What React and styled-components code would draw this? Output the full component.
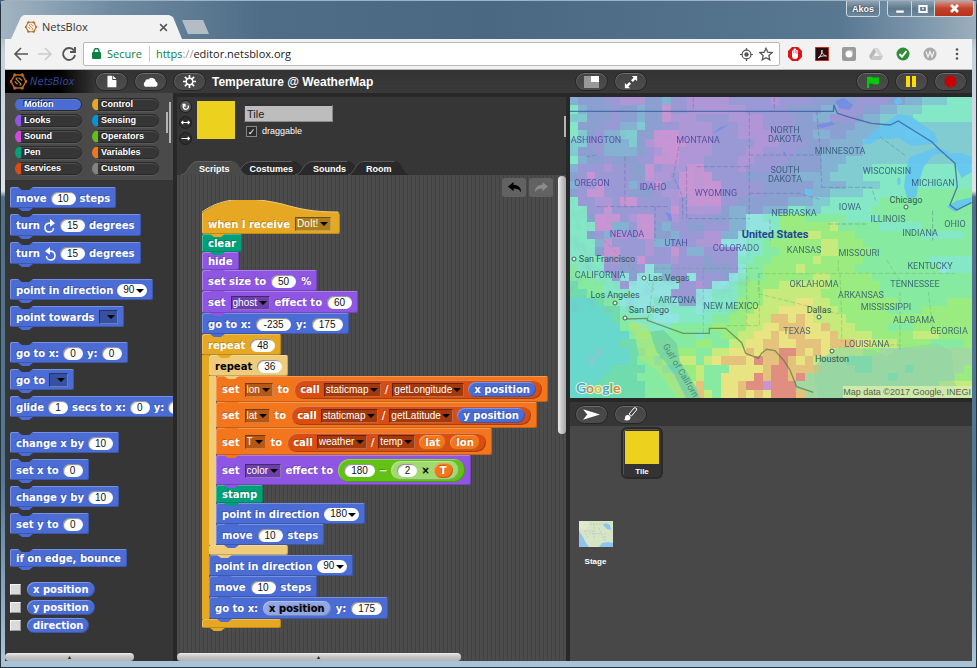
import React from "react";
import styled, { createGlobalStyle } from "styled-components";

const GlobalStyle = createGlobalStyle`
  * {
    box-sizing: border-box;
  }
  body {
    margin: 0;
    background: #3f617c;
  }
  button, input, select {
    font-family: inherit;
    margin: 0;
  }
  button {
    cursor: pointer;
  }
`;

const colors = {
  motion: "#4a6cd4",
  looks: "#8f56e3",
  sound: "#cf4ad9",
  pen: "#00a178",
  services: "#d94d11",
  control: "#e6a822",
  controlLight: "#efcb7a",
  sensing: "#0494dc",
  operators: "#62c213",
  operatorsLight: "#a1da71",
  variables: "#f3761d",
  custom: "#828282",
};

/* ---------- browser window ---------- */

const Window = styled.div`
  display: flex;
  flex-direction: column;
  min-height: 100vh;
  padding: 0 4px 6px 4px;
  background: linear-gradient(#7d95a8 0, #c6d0d8 50px, #dce2e6 190px, #4f7188 196px, #537892 480px, #a9c4d8 660px);
  border: 1px solid #26333d;
  border-top-color: #9fb2c1;
  border-radius: 6px 6px 0 0;
  font-family: "Liberation Sans", Arial, sans-serif;
`;

const TitleBar = styled.header`
  display: flex;
  align-items: flex-start;
  justify-content: space-between;
  height: 38px;
  margin: 0 -4px;
  padding: 0 2px 0 10px;
  background: linear-gradient(90deg, #a3b4c2 0, #6f8ba2 110px, #4f6d87 260px, #4a6882 50%, #587791 86%, #7f99ad 95%, #9cafbd);
`;

const TabStrip = styled.div`
  display: flex;
  align-items: center;
  align-self: flex-end;
`;

const BrowserTab = styled.div`
  display: flex;
  align-items: center;
  width: 171px;
  height: 24px;
  padding: 0 14px 0 14px;
  clip-path: polygon(0 100%, 10px 2px, 13px 0, 158px 0, 162px 2px, 100% 100%);
  background: #f2f2f2;
  color: #333;
  font-family: "Open Sans", "Noto Sans", sans-serif;
  font-size: 11px;
  line-height: 16px;
  span {
    flex: 1;
    padding-left: 5px;
  }
`;

const PlainButton = styled.button`
  display: inline-flex;
  align-items: center;
  justify-content: center;
  padding: 0;
  border: 0;
  background: none;
  color: ${(props) => props.$color || "#555"};
`;

const NewTab = styled.button`
  width: 27px;
  height: 14px;
  padding: 0;
  border: 0;
  background: #b5bdc4;
  clip-path: polygon(0 0, 78% 0, 100% 100%, 22% 100%);
`;

const WindowControls = styled.div`
  display: flex;
  gap: 7px;
`;

const ControlGroup = styled.div`
  display: flex;
  height: 16px;
  border: 1px solid #cbd6df;
  border-top: 0;
  border-radius: 0 0 4px 4px;
  overflow: hidden;
`;

const WindowButton = styled.button`
  display: flex;
  align-items: center;
  justify-content: center;
  width: ${(props) => props.$width}px;
  padding: 0;
  border: 0;
  border-right: 1px solid #cbd6df;
  background: ${(props) =>
    props.$close
      ? "linear-gradient(#d9968b, #c1422a 50%, #b8321a)"
      : "linear-gradient(#8fa3b3, #5f7a8e 50%, #6f899b)"};
  color: #fff;
  font-size: 9px;
  font-weight: bold;
  text-shadow: 0 0 2px #223;
  &:last-child {
    border-right: 0;
  }
`;

const Toolbar = styled.div`
  display: flex;
  align-items: center;
  height: 31px;
  padding: 0 8px 0 8px;
  background: #f2f2f2;
  border-bottom: 1px solid #b5b5b5;
`;

const NavButtons = styled.div`
  display: flex;
  gap: 8px;
  width: 70px;
`;

const AddressBar = styled.div`
  display: flex;
  flex: 1;
  align-items: center;
  gap: 6px;
  height: 24px;
  padding: 0 6px 0 8px;
  border: 1px solid #b8b8b8;
  border-radius: 2px;
  background: #fff;
  font-family: "Open Sans", "Noto Sans", sans-serif;
  font-size: 11px;
  line-height: 16px;
`;

const Secure = styled.span`
  padding-right: 7px;
  border-right: 1px solid #ccc;
  color: #0b8043;
`;

const Url = styled.span`
  flex: 1;
  color: #222;
  em {
    font-style: normal;
    color: #0b8043;
  }
  i {
    font-style: normal;
    color: #999;
  }
`;

const Extensions = styled.div`
  display: flex;
  gap: 13px;
  padding-left: 8px;
`;

/* ---------- IDE ---------- */

const Ide = styled.main`
  display: grid;
  flex: 1;
  grid-template-columns: 168px minmax(0, 1fr) 402px;
  grid-template-rows: 23px minmax(0, 1fr);
  column-gap: 4px;
  background: #282828;
`;

const ControlBar = styled.div`
  display: flex;
  grid-column: 1 / -1;
  align-items: center;
  background: linear-gradient(#333, #3a3a3a);
  color: #fff;
`;

const Logo = styled.div`
  display: flex;
  align-items: center;
  gap: 3px;
  width: 90px;
  height: 23px;
  padding-left: 5px;
  background: linear-gradient(90deg, #000 60%, #353535);
  color: #33489c;
  font-family: "DejaVu Sans", sans-serif;
  font-size: 10px;
  font-style: italic;
`;

const BarGroup = styled.div`
  display: flex;
  gap: 6px;
`;

const ProjectTitle = styled.h1`
  flex: 1;
  margin: 0;
  padding-left: 6px;
  font-size: 12px;
  line-height: 16px;
`;

const StageControls = styled.div`
  display: flex;
  justify-content: space-between;
  width: 402px;
  padding: 0 5px;
`;

const PushButton = styled.button`
  display: flex;
  align-items: center;
  justify-content: center;
  width: 33px;
  height: 19px;
  padding: 0;
  border: 1px solid #252525;
  border-radius: 10px;
  background: linear-gradient(#444, #4c4c4c);
  box-shadow: inset 0 1px 0 #6d6d6d, inset 1px 0 0 #5c5c5c;
  color: #fff;
`;

const Column = styled.section`
  display: flex;
  flex-direction: column;
  min-width: 0;
`;

const Categories = styled.div`
  position: relative;
  display: grid;
  grid-template-columns: 67px 67px;
  gap: 3px 10px;
  padding: 5px 0 5px 10px;
  background: #4a4a4a;
`;

const CategoryButton = styled.button`
  height: 13px;
  padding: 0 0 0 3px;
  border: 1px solid #2a2a2a;
  border-left: 6px solid ${(props) => props.$color};
  border-radius: 7px;
  background: ${(props) => (props.$active ? props.$color : "#363636")};
  box-shadow: inset 0 1px 0 rgba(255, 255, 255, 0.12), 0 1px 0 #595959;
  color: #fff;
  font-size: 9px;
  font-weight: bold;
  line-height: 11px;
  text-align: left;
  text-shadow: -1px -1px 0 #222;
`;

const Grip = styled.span`
  position: absolute;
  top: ${(props) => props.$top}px;
  right: ${(props) => props.$right}px;
  width: 2px;
  height: ${(props) => props.$height}px;
  background: #b4b4b4;
`;

const Palette = styled.div`
  display: flex;
  flex: 1;
  flex-direction: column;
  gap: 15px;
  padding: 7px 0 0 5px;
  overflow: hidden;
  background: #363636;
`;

const PaletteGroup = styled.div`
  display: flex;
  flex-direction: column;
  gap: ${(props) => props.$gap || 6}px;
`;

const WatcherRow = styled.label`
  display: flex;
  align-items: center;
  gap: 6px;
  input {
    appearance: none;
    width: 11px;
    height: 11px;
    border: 1px solid #f4f4f4;
    border-right-color: #999;
    border-bottom-color: #999;
    background: #dadada;
  }
`;

const ScrollThumb = styled.div`
  width: ${(props) => props.$width};
  height: 8px;
  margin-top: auto;
  border-radius: 4px;
  background: linear-gradient(#eee, #c8c8c8 40%, #b4b4b4);
  color: #222;
  font-size: 6px;
  line-height: 8px;
  text-align: center;
`;

const SpriteBar = styled.div`
  position: relative;
  display: flex;
  height: 64px;
  margin-top: 4px;
  padding: 3px 0 0 2px;
  gap: 5px;
  background: #363636;
  color: #fff;
`;

const RotationButtons = styled.div`
  display: flex;
  flex-direction: column;
  gap: 3px;
`;

const RoundButton = styled.button`
  display: flex;
  align-items: center;
  justify-content: center;
  width: 13px;
  height: 13px;
  padding: 0;
  border: 1px solid #1d1d1d;
  border-radius: 50%;
  background: ${(props) => (props.$active ? "#565656" : "#2e2e2e")};
  color: #fff;
`;

const Swatch = styled.div`
  width: ${(props) => props.$size}px;
  height: ${(props) => props.$size}px;
  margin-top: ${(props) => props.$top || 0}px;
  background: #edd11f;
`;

const SpriteFields = styled.div`
  display: flex;
  flex-direction: column;
  gap: 3px;
  padding: 4px 0 0 4px;
`;

const NameInput = styled.input`
  width: 89px;
  height: 18px;
  padding: 0 2px;
  border: 1px solid #8a8a8a;
  border-top: 2px solid #333;
  border-left-color: #444;
  background: #bdbdbd;
  color: #222;
  font-size: 11px;
`;

const CheckLabel = styled.label`
  display: flex;
  align-items: center;
  gap: 5px;
  padding-left: 2px;
  font-size: 9px;
  line-height: 12px;
  input {
    appearance: none;
    display: grid;
    place-items: center;
    width: 11px;
    height: 11px;
    border: 1px solid #888;
    background: #2c2c2c;
  }
  input:checked::before {
    content: "✓";
    color: #fff;
    font-family: "DejaVu Sans", sans-serif;
    font-size: 9px;
  }
`;

const Tabs = styled.nav`
  display: flex;
  height: 14px;
  padding-left: 4px;
  background: #363636;
`;

const TabButton = styled.button`
  position: relative;
  z-index: ${(props) => (props.$active ? 1 : 0)};
  height: 14px;
  margin-right: -16px;
  padding: 2px 18px 0;
  border: 0;
  background: none;
  color: #fff;
  font-size: 9px;
  font-weight: bold;
  line-height: 12px;
  svg {
    position: absolute;
    inset: 0;
    z-index: -1;
    width: 100%;
    height: 100%;
  }
`;

const ScriptPane = styled.div`
  position: relative;
  display: flex;
  flex: 1;
  flex-direction: column;
  padding: 25px 0 0 25px;
  background: repeating-linear-gradient(90deg, #4b4b4b 0 2px, #424242 2px 3px, #4d4d4d 3px 4px);
`;

const UndoGroup = styled.div`
  position: absolute;
  top: 3px;
  right: 13px;
  display: flex;
  gap: 3px;
  button {
    display: flex;
    align-items: center;
    justify-content: center;
    width: 24px;
    height: 19px;
    padding: 0;
    border: 0;
    border-radius: 3px;
    background: #626262;
  }
`;

const VerticalThumb = styled.div`
  position: absolute;
  top: 1px;
  right: 0;
  width: 8px;
  height: 53%;
  border-radius: 4px;
  background: linear-gradient(90deg, #eee, #c4c4c4 50%, #a8a8a8);
`;

const PaneScroll = styled.div`
  display: flex;
  margin: auto 0 0 -25px;
`;

const Stage = styled.div`
  margin-top: 4px;
  svg {
    display: block;
    width: 100%;
    height: auto;
  }
`;

const CorralBar = styled.div`
  display: flex;
  gap: 6px;
  align-items: center;
  height: 24px;
  margin-top: 4px;
  padding-left: 5px;
  background: #363636;
`;

const Corral = styled.div`
  display: flex;
  flex: 1;
  background: #484848;
`;

const StageIcon = styled.div`
  display: flex;
  flex-direction: column;
  align-items: center;
  align-self: center;
  gap: 10px;
  width: 51px;
  color: #fff;
  font-size: 8px;
  font-weight: bold;
  line-height: 10px;
`;

const SpriteIcon = styled.div`
  display: flex;
  flex-direction: column;
  align-items: center;
  gap: 3px;
  width: 42px;
  height: 52px;
  margin-top: 1px;
  padding-top: 2px;
  border: 2px solid #2a2a2a;
  border-radius: 6px;
  background: #333;
  box-shadow: inset 1px 1px 0 #555;
  color: #fff;
  font-size: 8px;
  font-weight: bold;
  line-height: 10px;
`;

/* ---------- blocks ---------- */

const notch = "polygon(0 0, 100% 0, 11px 100%, 4px 100%)";

const BlockBody = styled.div`
  position: relative;
  display: flex;
  flex-shrink: 0;
  align-items: center;
  gap: 5px;
  width: max-content;
  height: ${(props) => props.$height || 21}px;
  padding: 1px 6px 0;
  border-radius: 2px;
  background: ${(props) => props.$color};
  box-shadow: inset 1px 1px 0 rgba(255, 255, 255, 0.25), inset -1px -1px 0 rgba(0, 0, 0, 0.18);
  color: ${(props) => (props.$dark ? "#000" : "#fff")};
  text-shadow: ${(props) => (props.$dark ? "none" : "-1px -1px 0 rgba(0, 0, 0, 0.22)")};
  font-family: "DejaVu Sans", Verdana, sans-serif;
  font-size: 10px;
  font-weight: bold;
  line-height: 13px;
  white-space: nowrap;
  &::after {
    content: "";
    position: absolute;
    z-index: 1;
    bottom: -3px;
    left: ${(props) => props.$tab || 8}px;
    width: 15px;
    height: 3px;
    background: ${(props) => props.$color};
    clip-path: ${notch};
  }
`;

const PaletteBlock = styled(BlockBody)`
  gap: 4px;
  &::before {
    content: "";
    position: absolute;
    top: 0;
    left: 8px;
    width: 15px;
    height: 3px;
    background: #363636;
    clip-path: ${notch};
  }
`;

const HatTop = styled.svg`
  display: block;
  width: 138px;
  height: 13px;
`;

const HatBody = styled(BlockBody)`
  min-width: 138px;
  border-radius: 0 2px 2px 2px;
  box-shadow: inset 1px 0 0 rgba(255, 255, 255, 0.25), inset -1px -1px 0 rgba(0, 0, 0, 0.18);
`;

const LoopBody = styled.div`
  border-left: 7px solid ${(props) => props.$color};
`;

const LoopFoot = styled(BlockBody)`
  width: 79px;
`;

const Pill = styled.span`
  display: inline-flex;
  align-items: center;
  gap: ${(props) => props.$gap || 4}px;
  height: ${(props) => props.$height || 15}px;
  padding: 0 ${(props) => props.$pad || 6}px;
  border-radius: 12px;
  background: ${(props) => props.$color};
  box-shadow: inset 1px 1px 0 rgba(255, 255, 255, 0.28), inset -1px -1px 0 rgba(0, 0, 0, 0.2);
  color: ${(props) => (props.$dark ? "#000" : "#fff")};
  font-family: "DejaVu Sans", Verdana, sans-serif;
  font-size: 10px;
  font-weight: bold;
  line-height: 13px;
  white-space: nowrap;
`;

const NumberSlot = styled.input`
  width: ${(props) => props.$width}px;
  height: 13px;
  padding: 0;
  border: 0;
  border-radius: 7px;
  background: #fff;
  box-shadow: inset 1px 1px 1px rgba(0, 0, 0, 0.45);
  color: #111;
  font-family: "Liberation Sans", Arial, sans-serif;
  font-size: 10px;
  line-height: 13px;
  text-align: center;
`;

const MenuWrap = styled.span`
  position: relative;
  display: inline-flex;
  &::after {
    content: "";
    position: absolute;
    top: 5px;
    right: 3px;
    border: 4px solid transparent;
    border-top-color: #000;
    border-bottom: 0;
    pointer-events: none;
  }
  select {
    appearance: none;
    min-width: 19px;
    height: ${(props) => (props.$round ? 13 : 14)}px;
    padding: ${(props) => (props.$round ? "0 12px 0 6px" : "0 11px 0 1px")};
    border: ${(props) => (props.$round ? "0" : "1px solid")};
    border-color: rgba(0, 0, 0, 0.35) rgba(255, 255, 255, 0.25) rgba(255, 255, 255, 0.25) rgba(0, 0, 0, 0.35);
    border-radius: ${(props) => (props.$round ? 7 : 0)}px;
    background: ${(props) => (props.$round ? "#fff" : "rgba(0, 0, 0, 0.25)")};
    color: ${(props) => (props.$round ? "#111" : "#fff")};
    font-family: "Liberation Sans", Arial, sans-serif;
    font-size: 10px;
    line-height: 12px;
  }
`;

const slotWidths = { 1: 20, 2: 25, 3: 31, 4: 35 };

function Num({ value, label = "number" }) {
  return (
    <NumberSlot
      $width={slotWidths[value.length]}
      defaultValue={value}
      aria-label={label}
    />
  );
}

function Menu({ value = "", round }) {
  return (
    <MenuWrap $round={round}>
      <select aria-label={value || "choice"} defaultValue={value}>
        <option value={value}>{value}</option>
      </select>
    </MenuWrap>
  );
}

function Loop({ color, count, dark, last, children }) {
  return (
    <div>
      <BlockBody $color={color} $dark={dark} $tab={15}>
        repeat <Num value={count} />
      </BlockBody>
      <LoopBody $color={color}>{children}</LoopBody>
      <LoopFoot as="div" $color={color} $height={last ? 9 : 10} />
    </div>
  );
}

function Call({ service, rpc, children }) {
  return (
    <Pill $color={colors.services} $height={19} $pad={6} $gap={4}>
      call <Menu value={service} /> / <Menu value={rpc} /> {children}
    </Pill>
  );
}

function TurnIcon({ flip }) {
  return (
    <svg width="12" height="14" viewBox="0 0 12 14">
      <g transform={flip ? "translate(12 0) scale(-1 1)" : undefined}>
        <path d="M7 4C3 4 1 6 1 8.500c0 3 2 4.500 4.500 4.500S9.500 11 9.500 9" fill="none" stroke="#fff" strokeWidth="1.500" />
        <path d="M6 0l5 4.200-5 3.600z" fill="#fff" />
      </g>
    </svg>
  );
}

function PaletteBlocks() {
  const m = colors.motion;
  return (
    <>
      <PaletteGroup>
        <PaletteBlock $color={m}>
          move <Num value="10" /> steps
        </PaletteBlock>
        <PaletteBlock $color={m} $height={22}>
          turn <TurnIcon /> <Num value="15" /> degrees
        </PaletteBlock>
        <PaletteBlock $color={m} $height={22}>
          turn <TurnIcon flip /> <Num value="15" /> degrees
        </PaletteBlock>
      </PaletteGroup>
      <PaletteGroup>
        <PaletteBlock $color={m}>
          point in direction <Menu value="90" round />
        </PaletteBlock>
        <PaletteBlock $color={m}>
          point towards <Menu />
        </PaletteBlock>
      </PaletteGroup>
      <PaletteGroup>
        <PaletteBlock $color={m}>
          go to x: <Num value="0" /> y: <Num value="0" />
        </PaletteBlock>
        <PaletteBlock $color={m}>
          go to <Menu />
        </PaletteBlock>
        <PaletteBlock $color={m}>
          glide <Num value="1" /> secs to x: <Num value="0" /> y: <Num value="0" />
        </PaletteBlock>
      </PaletteGroup>
      <PaletteGroup>
        <PaletteBlock $color={m}>
          change x by <Num value="10" />
        </PaletteBlock>
        <PaletteBlock $color={m}>
          set x to <Num value="0" />
        </PaletteBlock>
        <PaletteBlock $color={m}>
          change y by <Num value="10" />
        </PaletteBlock>
        <PaletteBlock $color={m}>
          set y to <Num value="0" />
        </PaletteBlock>
      </PaletteGroup>
      <PaletteBlock $color={m} $height={18}>
        if on edge, bounce
      </PaletteBlock>
      <PaletteGroup $gap={3}>
        {["x position", "y position", "direction"].map((name) => (
          <WatcherRow key={name}>
            <input type="checkbox" />
            <Pill $color={m}>{name}</Pill>
          </WatcherRow>
        ))}
      </PaletteGroup>
    </>
  );
}

function Script() {
  const c = colors;
  return (
    <div>
      <HatTop viewBox="0 0 138 13">
        <path d="M0 13C22-4 50-3 80 4c18 5 30 8 56 8l2 1z" fill={c.control} />
        <path d="M0 12C22-4 50-3 80 4c18 5 30 8 56 8" fill="none" stroke="#f3cf7c" />
      </HatTop>
      <HatBody $color={c.control}>
        when I receive <Menu value="DoIt!" />
      </HatBody>
      <BlockBody $color={c.pen} $height={18}>clear</BlockBody>
      <BlockBody $color={c.looks} $height={18}>hide</BlockBody>
      <BlockBody $color={c.looks}>
        set size to <Num value="50" /> %
      </BlockBody>
      <BlockBody $color={c.looks} $height={22}>
        set <Menu value="ghost" /> effect to <Num value="60" />
      </BlockBody>
      <BlockBody $color={c.motion} $height={21}>
        go to x: <Num value="-235" /> y: <Num value="175" />
      </BlockBody>
      <Loop color={c.control} count="48" last>
        <Loop color={c.controlLight} count="36" dark>
          <BlockBody $color={c.variables} $height={26}>
            set <Menu value="lon" /> to
            <Call service="staticmap" rpc="getLongitude">
              <Pill $color={c.motion}>x position</Pill>
            </Call>
          </BlockBody>
          <BlockBody $color={c.variables} $height={26}>
            set <Menu value="lat" /> to
            <Call service="staticmap" rpc="getLatitude">
              <Pill $color={c.motion}>y position</Pill>
            </Call>
          </BlockBody>
          <BlockBody $color={c.variables} $height={27}>
            set <Menu value="T" /> to
            <Call service="weather" rpc="temp">
              <Pill $color={c.variables}>lat</Pill>
              <Pill $color={c.variables}>lon</Pill>
            </Call>
          </BlockBody>
          <BlockBody $color={c.looks} $height={30}>
            set <Menu value="color" /> effect to
            <Pill $color={c.operators} $height={23}>
              <Num value="180" /> −
              <Pill $color={c.operatorsLight} $height={19} $dark>
                <Num value="2" /> ×
                <Pill $color={c.variables}>T</Pill>
              </Pill>
            </Pill>
          </BlockBody>
          <BlockBody $color={c.pen} $height={18}>stamp</BlockBody>
          <BlockBody $color={c.motion}>
            point in direction <Menu value="180" round />
          </BlockBody>
          <BlockBody $color={c.motion}>
            move <Num value="10" /> steps
          </BlockBody>
        </Loop>
        <BlockBody $color={c.motion}>
          point in direction <Menu value="90" round />
        </BlockBody>
        <BlockBody $color={c.motion}>
          move <Num value="10" /> steps
        </BlockBody>
        <BlockBody $color={c.motion} $height={22}>
          go to x:
          <Pill $color="#92a7e5" $dark>x position</Pill> y: <Num value="175" />
        </BlockBody>
      </Loop>
    </div>
  );
}

/* ---------- weather map ---------- */

const cellColors = {
  P: "#c994d4",
  p: "#b096d7",
  v: "#9b98d6",
  b: "#8b9fd0",
  c: "#84b2d2",
  t: "#80ccd0",
  k: "#92e4e0",
  m: "#84e8c6",
  g: "#86eba0",
  l: "#9aec80",
  y: "#c6ea7c",
  Y: "#e8e481",
  o: "#e5c27c",
  r: "#e08e7f",
  s: "#68d8cc",
  e: "#70dcae",
  u: "#a2d8a2",
};

// one string per row of tiles, run-length coded
const tileRows = [
  "c1b3v2p3b2c1v2p5v5p1v4b5v4b2c2t3m5",
  "m1c1b3v1b2c1b2P1v2p7v5b4c2v3b2c2t3m6",
  "t2b3v1b2c1b2P1p3v4p4v4b2c2v3b1c2t4m6",
  "m1b3v2c2t1b2v2p4v3p3v4b3v1b3c3t11",
  "m1t1b1v1c2t2b2P3p4v3p4v3b2c2b2c4t3k3t7",
  "t2v2c3t1b1p1P4p3v5p3v3b3c4t12",
  "t1b2v1c4b1v1p1P2p4v4p2v4b3c5t12",
  "m1c1b2v1b3v2P3p3v4p2v4b4c3t14",
  "c1v3p1v2b2P1v1p3P2v4p1v4b5c2t4m12",
  "b1v1P1v4b2P1p2v1P4v4b6c4t4m12",
  "c1v2P1v3c1v2P1v2P5v5b6c4t4m11",
  "b1v1P2v3b3v1p2P5v5b5c3t4m5g9",
  "m1v2p2v1P2v4p1v1P4v2b6c3t2m6g11",
  "m2v2P1v7P1v1p4b1c2b2c3m2t2m6g12",
  "m2b1P3v1p1P2v2p1v1v3b2c2k2m2l3g5m4g12",
  "m3P2c2v1P2b1c1v2b2v3c2k3m1l6y1g5m5g9",
  "m2b1v1c1p2v1P2b2c1v3p2c2k2m2g2l2y2l4g8m5g5",
  "m3c1P1v4p1c2b2v1p3k3m2g1l6y2l3g14",
  "m3b1P2v3p1v2P1v1c2v4k1m2g2l5y2l4g12",
  "m4p2v2P1v3p1v3b1v3m2g2l5y1l5g8m3",
  "g1m3v2b2v1k1c2v3v1b3v1k1g2l4y1l6g10k1m3",
  "g3m2v1k1b1k3c1v2k1v3b1k1m1g2l6y2l5g12",
  "e1g3m2v1k3k3v2p1v1k2m1g1l4y6l6g12l3",
  "e2g2m3k5v1v2k2m3g1l2y7l7g11l2",
  "s3e1g2k4m2k1b2k2m3l3y4Y2y2l8g6l6",
  "s4e2m2k4m3k1m3g1l2y3Y4y3l6g4l9",
  "s5e1g1m3k3m4g2l2y3o2Y1o1Y1y4l16",
  "s6g1l1m4g5l4y2Y2o3Y2o1y3l4g3l8",
  "s7g1l2g5m1g2l2y2Y2o1Y1o2Y3o1y4l5y3l8",
  "s6e2g2l2g3l2g2y2Y2o2Y2o3Y1o3Y2y3l4g4l4",
  "s3t1s3e2l2g1l3g2y2Y2o1Y1o2r2o1Y1o1Y1y4l2u10",
  "s2t1s4e1g2s1l2y2g1y1Y1o3Y1r1o2r1o1Y1o1y1u3e3u12",
  "s5e4g2s2l2y1g3Y2Y2o1r2o3o1u4e2u4e1u6l2",
  "s4e4g4u1l2y1g2Y4r1o1r2o1r1u10e1u7l3",
  "s3e6g4u1y1o1g2Y2o1r1r1P1r3u17y2",
  "s2e7g4u1l1o1y1g1Y2o1Y1o1Y1r3o1u19",
];

function decodeRow(row) {
  const tiles = [];
  let start = 0;
  for (const [, key, count] of row.matchAll(/([a-zA-Z])(\d+)/g)) {
    const end = start + Number(count);
    tiles.push({ key, start, end });
    start = end;
  }
  tiles[tiles.length - 1].end = 48;
  return tiles;
}

const states = [
  ["ASHINGTON", 26, 46], ["MONTANA", 128, 46], ["NORTH", 215, 36],
  ["DAKOTA", 215, 45], ["MINNESOTA", 270, 57], ["SOUTH", 215, 76],
  ["DAKOTA", 215, 85], ["WISCONSIN", 317, 77], ["MICHIGAN", 363, 89],
  ["OREGON", 22, 89], ["IDAHO", 83, 93], ["WYOMING", 146, 99],
  ["IOWA", 280, 113], ["NEBRASKA", 224, 119], ["ILLINOIS", 318, 125],
  ["OHIO", 385, 130], ["INDIANA", 350, 139], ["NEVADA", 57, 140],
  ["UTAH", 106, 149], ["COLORADO", 166, 154], ["KANSAS", 234, 156],
  ["MISSOURI", 289, 159], ["KENTUCKY", 360, 172], ["CALIFORNIA", 30, 181],
  ["OKLAHOMA", 244, 190], ["TENNESSEE", 345, 190], ["ARKANSAS", 291, 201],
  ["ARIZONA", 107, 206], ["NEW MEXICO", 161, 212], ["MISSISSIPPI", 316, 213],
  ["ALABAMA", 344, 226], ["TEXAS", 227, 237], ["GEORGIA", 379, 237],
  ["LOUISIANA", 297, 250],
];

const cities = [
  ["San Francisco", 37, 165, 4, 162], ["Las Vegas", 99, 184, 74, 181],
  ["Los Angeles", 45, 201, 45, 206], ["San Diego", 79, 216, 55, 221],
  ["Chicago", 336, 106, 336, 110], ["Dallas", 249, 216, 249, 220],
  ["Houston", 262, 265, 262, 254],
];

function WeatherMap() {
  return (
    <svg viewBox="0 0 402 301" role="img" aria-label="Temperature map">
      <defs>
        <filter id="relief" x="0" y="0" width="100%" height="100%">
          <feTurbulence type="fractalNoise" baseFrequency="0.09" numOctaves="4" seed="4" />
          <feColorMatrix values="0 0 0 0 .25  0 0 0 0 .4  0 0 0 0 .55  1.800 0 0 0 -.75" />
        </filter>
      </defs>
      <g shapeRendering="crispEdges">
        {tileRows.map((row, j) =>
          decodeRow(row).map((tile) => (
            <rect
              key={j + "-" + tile.start}
              x={tile.start * 8.375}
              y={j * 8.36}
              width={(tile.end - tile.start) * 8.375}
              height={8.5}
              fill={cellColors[tile.key]}
            />
          ))
        )}
      </g>
      <rect width="180" height="215" filter="url(#relief)" opacity=".28" />
      <g transform="translate(-10 -7) scale(.3333)">
        <g fill="#63c4f4" opacity=".85">
          <path d="M905 160l40-40 30-20 38-27 40 5 40 30 30 20 12 30-30 5-50 5-40-25-30 5-25-5-30 20z" />
          <path d="M1050 200l35-12 45-17 40 16-50 8-28 35-17 50-5 40-26 10-12-40 8-60z" />
          <path d="M1155 190l50 0 30 12v45l-30 18-20-40z" />
          <path d="M1160 350l30-18 45-10v17l-50 26z" />
          <path d="M1000 30l20-8 8 15-20 8zM735 295l18 5-2 20-14-6zM1012 265l8-3 2 20-9 3z" />
        </g>
        <g fill="#6684ee" opacity=".6">
          <path d="M315 365l18 8 4 22-10-5zM455 130l30-20 20-5-30 18zM825 35l25-12 30 22-12 15-30-5zM770 105l45-10 10 8-40 12zM668 185l8 0 2 18z" />
        </g>
        <g fill="none" stroke="#54619b" strokeWidth="2.500" strokeDasharray="14 6" opacity=".45">
          <path d="M400 22v42M643 22v42M568 64v310M568 195h215M568 310h150l60 18M770 64l12 130 3 98M785 292h150l12 40M110 350h215M110 195l-30 5M195 200v150M360 150l-20 110 28 60v66M410 230h158M380 230v156h190M285 350v102M630 388v64M805 402h115M1118 362v90M960 140l80 60" />
        </g>
        <path d="M30 64h790l2-19 10 25 38 12 35 10 30 8 55 5 25-12 100 62 25 25 45 40 7 70-22 55 20 15 45-22" fill="none" stroke="#315b9c" strokeWidth="4" opacity=".75" />
      </g>
      <g transform="translate(-10 143) scale(.3333)">
        <path d="M270 275l40-5 40 40 10 55 50 80 10 30h-45l-35-80-50-60z" fill="#72d2a4" opacity=".8" />
        <path d="M205 243l55 10 25 80 50 60 45 80h-30l-60-85-50-30-15-65z" fill="#b0e67c" opacity=".6" />
        <path d="M840 320l100 10 40 20 30-25 120-15 45 25 8 90 30 50H775l-15-95 40-35z" fill="#8dd4a6" opacity=".5" />
        <g fill="none" stroke="#68945f" strokeWidth="2.500" strokeDasharray="14 6" opacity=".4">
          <path d="M285 85h310M595 101h240M560 85v172M595 101v60l80 20 160 40M430 85v195M500 257h98V101M835 60v40h350M840 101l5 130v75M1020 155v180M1105 155l15 120M980 60l45 70M285 85l-20 150M130 0l155 150M950 315h80" />
        </g>
        <path d="M195 237l67-2v6l108 39h78v-15h49l48 43 12 32 38 15 10-15 15-12 25 4 25 28 20 30 20 50 50 17" fill="none" stroke="#627b42" strokeWidth="4" opacity=".75" />
      </g>
      <g fontFamily="Roboto, sans-serif" textAnchor="middle">
        <g fontSize="9" fill="#2c5270" opacity=".82">
          {states.map(([name, x, y]) => (
            <text key={name + y} x={x} y={y} fill={x < 200 && y < 160 ? "#45409a" : undefined}>
              {name}
            </text>
          ))}
        </g>
        {cities.map(([name, x, y, cx, cy]) => (
          <g key={name} fill="#2f5b50">
            <text x={x} y={y} fontSize="9">{name}</text>
            <circle cx={cx} cy={cy} r="2" fill="#dff4e8" stroke="#3c6157" />
          </g>
        ))}
        <text x="205" y="141" fontSize="11" fontWeight="bold" fill="#2a4490">
          United States
        </text>
        <text x="108" y="275" fontSize="9" fill="#4f8a78" transform="rotate(59 108 275)">
          Gulf of Californ
        </text>
      </g>
      <text x="6" y="296" fontFamily="Lato, sans-serif" fontSize="14" fontWeight="bold" stroke="#e9f5d8" strokeWidth="2" paintOrder="stroke">
        <tspan fill="#4aa8d8">G</tspan>
        <tspan fill="#c98c45">o</tspan>
        <tspan fill="#d1c23a">o</tspan>
        <tspan fill="#4aa8d8">g</tspan>
        <tspan fill="#5cb85c">l</tspan>
        <tspan fill="#c98c45">e</tspan>
      </text>
      <rect x="273" y="289" width="129" height="12" fill="#d8ebae" opacity=".85" />
      <text x="401" y="298" textAnchor="end" fontFamily="Liberation Sans, sans-serif" fontSize="9" fill="#55644a">
        Map data ©2017 Google, INEGI
      </text>
    </svg>
  );
}

function StageThumb() {
  return (
    <svg width="34" height="26" viewBox="0 0 34 26">
      <path d="M0 0h34v26H0z" fill="#d5e5c6" />
      <path d="M0 10l4 6 3 6 3 4H0zM20 26l3-4 6-1 5 1v4zM24 4l3-2 4 2 1 5-4-1z" fill="#8fc4ee" />
      <path d="M2 3h25M7 3v7h8M15 3v14M10 12l13 1M20 7l5 12M4 7l5 10M26 12v8" stroke="#a9bda2" strokeWidth=".5" strokeDasharray="2 1" fill="none" />
      <path d="M0 0h10v4L7 9 0 8z" fill="#e8ebcf" opacity=".7" />
    </svg>
  );
}

/* ---------- chrome icons ---------- */

function HexLogo({ size }) {
  return (
    <svg width={size} height={size} viewBox="0 0 18 18" fill="none">
      <path d="M5 2h8l4 7-4 7H5L1 9z" stroke="#c4651f" strokeWidth="1.600" />
      <g fill="#c4651f">
        <circle cx="5" cy="2" r="1.700" /><circle cx="13" cy="2" r="1.700" />
        <circle cx="17" cy="9" r="1.500" /><circle cx="13" cy="16" r="1.700" />
        <circle cx="5" cy="16" r="1.700" /><circle cx="1" cy="9" r="1.500" />
      </g>
      <path d="M6 6l6 6M5 9l3 3M9 5l4 3M6 6l2-1M10 13l2-1" stroke="#b98a3b" strokeWidth="1.300" />
    </svg>
  );
}

function Icon({ size = 16, d, stroke = 1.6, color = "currentColor", fill }) {
  return (
    <svg width={size} height={size} viewBox="0 0 16 16">
      <path
        d={d}
        fill={fill ? color : "none"}
        stroke={fill ? "none" : color}
        strokeWidth={stroke}
      />
    </svg>
  );
}

function ExtensionIcons() {
  return (
    <Extensions>
      <svg width="14" height="14" viewBox="0 0 14 14">
        <path d="M4 0h6l4 4v6l-4 4H4l-4-4V4z" fill="#d8161b" />
        <path d="M7 1.500c1 0 1 .5 1 1.500l2 .5v5c0 2-1 3.500-3 3.500S4 11 4 9V4l1.500-1C5.500 2 6 1.500 7 1.500z" fill="#fff" />
        <path d="M5.700 3.500v3M7.300 3v3M8.800 4v3" stroke="#d8161b" strokeWidth=".5" />
      </svg>
      <svg width="14" height="14" viewBox="0 0 14 14">
        <path d="M.5.5h13v13H.5z" fill="#2a0d0c" stroke="#c1301f" />
        <path d="M3 11c3-2 4.500-6 4-8-1 2 1.500 5.500 4.500 6C9 8.500 5.500 9 3 11z" fill="none" stroke="#e8ddd9" />
      </svg>
      <svg width="14" height="14" viewBox="0 0 14 14">
        <rect width="14" height="14" rx="2" fill="#9b9b9b" />
        <circle cx="7" cy="7" r="3.500" fill="#fff" />
        <path d="M7 3.500h3.500V7z" fill="#ddd" />
      </svg>
      <svg width="14" height="14" viewBox="0 0 14 14">
        <path d="M5 1h4l5 8h-4z" fill="#d8d8d8" />
        <path d="M5 1L0 9l2 4 5-8z" fill="#b9b9b9" />
        <path d="M2 13h10l2-4H5z" fill="#c7c7c7" />
      </svg>
      <svg width="14" height="14" viewBox="0 0 14 14">
        <circle cx="7" cy="7" r="6.500" fill="#2e8b37" />
        <path d="M3.500 7l2.500 2.800L10.500 4" fill="none" stroke="#fff" strokeWidth="2" />
      </svg>
      <svg width="14" height="14" viewBox="0 0 14 14">
        <circle cx="7" cy="7" r="6.500" fill="#a9a9a9" />
        <path d="M3 4.500l2 5.500 2-5.500 2 5.500 2-5.500" fill="none" stroke="#f3f3f3" strokeWidth="1.200" />
      </svg>
      <svg width="14" height="14" viewBox="0 0 14 14" fill="#555">
        <circle cx="7" cy="2.500" r="1.300" /><circle cx="7" cy="7" r="1.300" /><circle cx="7" cy="11.500" r="1.300" />
      </svg>
    </Extensions>
  );
}

const categories = [
  ["Motion", colors.motion], ["Control", colors.control],
  ["Looks", colors.looks], ["Sensing", colors.sensing],
  ["Sound", colors.sound], ["Operators", colors.operators],
  ["Pen", colors.pen], ["Variables", colors.variables],
  ["Services", colors.services], ["Custom", colors.custom],
];

function SnapTab({ children, active }) {
  const fill = active ? "#4a4a4a" : "#292929";
  return (
    <TabButton $active={active}>
      <svg viewBox="0 0 70 14" preserveAspectRatio="none">
        <path d="M0 14C8 13 8 0 18 0H53c9 0 9 13 17 14z" fill={fill} />
        <path d="M0 14C8 13 8 .5 18 .5H53" fill="none" stroke="#666" strokeWidth=".8" />
      </svg>
      {children}
    </TabButton>
  );
}

const PaletteTrack = styled.div`
  display: flex;
  background: #363636;
`;

export default function App() {
  return (
    <>
      <GlobalStyle />
      <Window>
        <TitleBar>
          <TabStrip>
            <BrowserTab>
              <HexLogo size={12} />
              <span>NetsBlox</span>
              <PlainButton aria-label="Close tab">
                <Icon size={9} d="M2 2l12 12M14 2L2 14" stroke={2.6} />
              </PlainButton>
            </BrowserTab>
            <NewTab aria-label="New tab" />
          </TabStrip>
          <WindowControls>
            <ControlGroup>
              <WindowButton $width={32}>Akos</WindowButton>
            </ControlGroup>
            <ControlGroup>
              <WindowButton $width={24} aria-label="Minimize">
                <Icon size={12} d="M3 10h10v3H3z" fill />
              </WindowButton>
              <WindowButton $width={23} aria-label="Maximize">
                <Icon size={12} d="M3 4h10v8H3zM7 7.500h2" stroke={2.4} />
              </WindowButton>
              <WindowButton $width={38} $close aria-label="Close">
                <Icon size={11} d="M3 3l10 10M13 3L3 13" stroke={4} />
              </WindowButton>
            </ControlGroup>
          </WindowControls>
        </TitleBar>
        <Toolbar>
          <NavButtons>
            <PlainButton aria-label="Back">
              <Icon d="M15 8H3M8 2L2 8l6 6" />
            </PlainButton>
            <PlainButton $color="#ccc" aria-label="Forward">
              <Icon d="M1 8h12M8 2l6 6-6 6" />
            </PlainButton>
            <PlainButton aria-label="Reload">
              <Icon d="M13 4.500A6 6 0 1 0 14 9M14 1v5H9" stroke={1.9} />
            </PlainButton>
          </NavButtons>
          <AddressBar>
            <svg width="9" height="12" viewBox="0 0 9 12">
              <rect y="4" width="9" height="7" rx="1" fill="#0b8043" />
              <path d="M2 5V3a2.500 2.500 0 0 1 5 0v2" fill="none" stroke="#0b8043" strokeWidth="1.400" />
            </svg>
            <Secure>Secure</Secure>
            <Url>
              <em>https</em><i>://</i>editor.netsblox.org
            </Url>
            <svg width="13" height="13" viewBox="0 0 16 16" fill="none" stroke="#555" strokeWidth="1.500">
              <circle cx="8" cy="8" r="5.500" />
              <circle cx="8" cy="8" r="2" fill="#555" />
              <path d="M8 0v3M8 13v3M0 8h3M13 8h3" />
            </svg>
            <Icon size={14} color="#555" stroke={1.5} d="M8 1.500l2 4.500 5 .5-3.700 3.300 1 4.900L8 12.200l-4.300 2.500 1-4.900L1 6.500 6 6z" />
          </AddressBar>
          <ExtensionIcons />
        </Toolbar>

        <Ide>
          <ControlBar>
            <Logo>
              <HexLogo size={17} />
              NetsBlox
            </Logo>
            <BarGroup>
              <PushButton aria-label="File">
                <Icon size={13} d="M3 1h6v5h5v9H3zM10 1l4 4h-4z" fill />
              </PushButton>
              <PushButton aria-label="Cloud">
                <Icon size={17} d="M3 13a3 3 0 0 1 0-5 2.500 2.500 0 0 1 3-2 4 4 0 0 1 7 2 2.700 2.700 0 0 1 0 5z" fill />
              </PushButton>
              <PushButton aria-label="Settings">
                <svg width="13" height="13" viewBox="0 0 16 16" fill="none" stroke="#fff">
                  <circle cx="8" cy="8" r="4" strokeWidth="1.800" />
                  <path d="M8 0v4M8 12v4M0 8h4M12 8h4M2.300 2.300l3 3M10.700 10.700l3 3M13.700 2.300l-3 3M2.300 13.700l3-3" strokeWidth="2" />
                </svg>
              </PushButton>
            </BarGroup>
            <ProjectTitle>Temperature @ WeatherMap</ProjectTitle>
            <StageControls>
              <BarGroup>
                <PushButton aria-label="Stage size">
                  <svg width="15" height="12" viewBox="0 0 15 12">
                    <path d="M0 0h15v12H0z" fill="#999" />
                    <path d="M7 0h8v6H7z" fill="#fff" />
                  </svg>
                </PushButton>
                <PushButton aria-label="Full screen">
                  <Icon size={14} d="M15 1v6l-2-2-3 3-2-2 3-3-2-2zM1 15V9l2 2 3-3 2 2-3 3 2 2z" fill />
                </PushButton>
              </BarGroup>
              <BarGroup>
                <PushButton aria-label="Run">
                  <svg width="14" height="12" viewBox="0 0 14 12">
                    <path d="M1 1c4-2 5 2 12 0v7C8 10 6 6 3 8v4H1z" fill="#00c80a" />
                  </svg>
                </PushButton>
                <PushButton aria-label="Pause">
                  <svg width="11" height="11" viewBox="0 0 11 11">
                    <path d="M0 0h4v11H0zM6 0h4v11H6z" fill="#ffdc00" />
                  </svg>
                </PushButton>
                <PushButton aria-label="Stop">
                  <Icon size={13} d="M5 1h6l4 4v6l-4 4H5l-4-4V5z" color="#c80000" fill />
                </PushButton>
              </BarGroup>
            </StageControls>
          </ControlBar>

          <Column>
            <Categories>
              {categories.map(([name, color]) => (
                <CategoryButton key={name} $color={color} $active={name === "Motion"}>
                  {name}
                </CategoryButton>
              ))}
              <Grip $top={9} $right={2} $height={41} />
              <Grip $top={19} $right={5} $height={21} />
            </Categories>
            <Palette>
              <PaletteBlocks />
            </Palette>
            <PaletteTrack>
              <ScrollThumb $width="129px">▴</ScrollThumb>
            </PaletteTrack>
          </Column>

          <Column>
            <SpriteBar>
              <RotationButtons>
                <RoundButton $active aria-label="Rotate freely">
                  <Icon size={8} d="M12 5a5 5 0 1 1-8-1M1 3h5v5" stroke={2.6} />
                </RoundButton>
                <RoundButton aria-label="Flip left and right">
                  <Icon size={9} d="M1 8h14M4 5L1 8l3 3M12 5l3 3-3 3" stroke={2} />
                </RoundButton>
                <RoundButton aria-label="Do not rotate">
                  <Icon size={9} d="M1 8h14M12 5l3 3-3 3" stroke={2} />
                </RoundButton>
              </RotationButtons>
              <Swatch $size={38} $top={1} />
              <SpriteFields>
                <NameInput defaultValue="Tile" aria-label="Sprite name" />
                <CheckLabel>
                  <input type="checkbox" defaultChecked />
                  draggable
                </CheckLabel>
              </SpriteFields>
              <Grip $top={19} $right={0} $height={21} />
            </SpriteBar>
            <Tabs>
              <SnapTab active>Scripts</SnapTab>
              <SnapTab>Costumes</SnapTab>
              <SnapTab>Sounds</SnapTab>
              <SnapTab>Room</SnapTab>
            </Tabs>
            <ScriptPane>
              <Script />
              <UndoGroup>
                <button aria-label="Undo">
                  <Icon size={15} color="#000" d="M1 7l6-5v3c5 0 8 3 8 8-2-3-4-4-8-4v3z" fill />
                </button>
                <button aria-label="Redo">
                  <Icon size={15} color="#8b8b8b" d="M15 7L9 2v3c-5 0-8 3-8 8 2-3 4-4 8-4v3z" fill />
                </button>
              </UndoGroup>
              <VerticalThumb />
              <PaneScroll>
                <ScrollThumb $width="73%">▴</ScrollThumb>
              </PaneScroll>
            </ScriptPane>
          </Column>

          <Column>
            <Stage>
              <WeatherMap />
            </Stage>
            <CorralBar>
              <PushButton aria-label="Add a turtle sprite">
                <Icon size={17} d="M0 3l16 5-16 5 4-5z" fill />
              </PushButton>
              <PushButton aria-label="Paint a new sprite">
                <svg width="14" height="14" viewBox="0 0 14 14">
                  <path d="M0 13c2-1 0-4 3-5 2-.5 4 1 3.500 3C6 13.500 3 14 0 13z" fill="#fff" />
                  <path d="M5 7l5-6c1-1 3.500.5 2.500 2l-5 6z" fill="none" stroke="#fff" />
                </svg>
              </PushButton>
            </CorralBar>
            <Corral>
              <StageIcon>
                <StageThumb />
                Stage
              </StageIcon>
              <SpriteIcon>
                <Swatch $size={34} />
                Tile
              </SpriteIcon>
            </Corral>
          </Column>
        </Ide>
      </Window>
    </>
  );
}
